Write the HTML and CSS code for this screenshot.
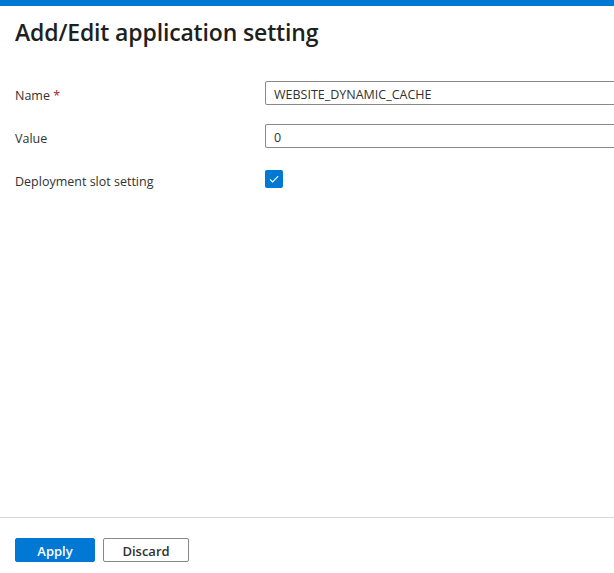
FILE: index.html
```html
<!DOCTYPE html>
<html lang="en">
<head>
<meta charset="utf-8">
<title>Add/Edit application setting</title>
<link rel="stylesheet" href="styles.css">
</head>
<body>
<div class="page">
  <div class="topbar"></div>
  <main class="content">
    <h1 class="title">Add/Edit application setting</h1>
    <div class="form">
      <div class="row">
        <label class="label">Name <span class="req">*</span></label>
        <div class="field"><input class="input" type="text" value="WEBSITE_DYNAMIC_CACHE"></div>
      </div>
      <div class="row">
        <label class="label">Value</label>
        <div class="field"><input class="input" type="text" value="0"></div>
      </div>
      <div class="row row-check">
        <label class="label">Deployment slot setting</label>
        <div class="field">
          <span class="checkbox">
            <svg width="12" height="12" viewBox="0 0 12 12"><path d="M2 6.4 L4.6 9 L10.2 3.2" fill="none" stroke="#fff" stroke-width="1.1"/></svg>
          </span>
        </div>
      </div>
    </div>
  </main>
  <footer class="footer">
    <button class="btn btn-primary">Apply</button>
    <button class="btn btn-default">Discard</button>
  </footer>
</div>
</body>
</html>
```
FILE: styles.css
```css
html, body {
  margin: 0;
  padding: 0;
  height: 100%;
  overflow: hidden;
  background: #fff;
}
body {
  font-family: "Segoe UI", "Open Sans", "Noto Sans", sans-serif;
  color: #323130;
  font-size: 13px;
}
.page {
  display: flex;
  flex-direction: column;
  height: 100vh;
}
.topbar {
  height: 6px;
  background: #0078d4;
  flex: none;
}
.content {
  flex: 1;
  padding: 0 0 0 15px;
}
.title {
  margin: 11px 0 0;
  font-size: 23px;
  font-weight: 600;
  line-height: 30px;
  color: #201f1e;
  letter-spacing: -0.15px;
}
.form {
  margin-top: 34px;
  display: flex;
  flex-direction: column;
  gap: 19px;
}
.row {
  display: grid;
  grid-template-columns: 250px 400px;
  align-items: center;
  height: 24px;
}
.row-check {
  margin-top: 3px;
  height: 18px;
  align-items: start;
}
.label {
  font-size: 12.5px;
  color: #323130;
  padding-top: 4px;
}
.row-check .label {
  padding-top: 3px;
  line-height: 17px;
}
.req {
  color: #a4262c;
}
.field {
  display: flex;
  align-items: center;
}
.input {
  box-sizing: border-box;
  width: 400px;
  height: 24px;
  border: 1px solid #8a8886;
  border-radius: 2px;
  padding: 2px 8px 0;
  font-family: inherit;
  font-size: 12.5px;
  color: #323130;
  background: #fff;
  outline: none;
}
.checkbox {
  width: 18px;
  height: 18px;
  border-radius: 2px;
  background: #0078d4;
  display: flex;
  align-items: center;
  justify-content: center;
}
.footer {
  flex: none;
  border-top: 1px solid #d8d8d8;
  display: flex;
  align-items: flex-start;
  gap: 8px;
  padding: 20px 0 0 15px;
  box-sizing: border-box;
  height: 56px;
}
.btn {
  height: 24px;
  box-sizing: border-box;
  font-family: inherit;
  font-size: 13px;
  border-radius: 2px;
  padding: 1px 0 0;
  cursor: pointer;
}
.btn-primary {
  width: 80px;
  background: #0078d4;
  border: 1px solid #0078d4;
  color: #fff;
  font-weight: 600;
}
.btn-default {
  width: 86px;
  background: #fff;
  border: 1px solid #8a8886;
  color: #323130;
  font-weight: 600;
}
```
